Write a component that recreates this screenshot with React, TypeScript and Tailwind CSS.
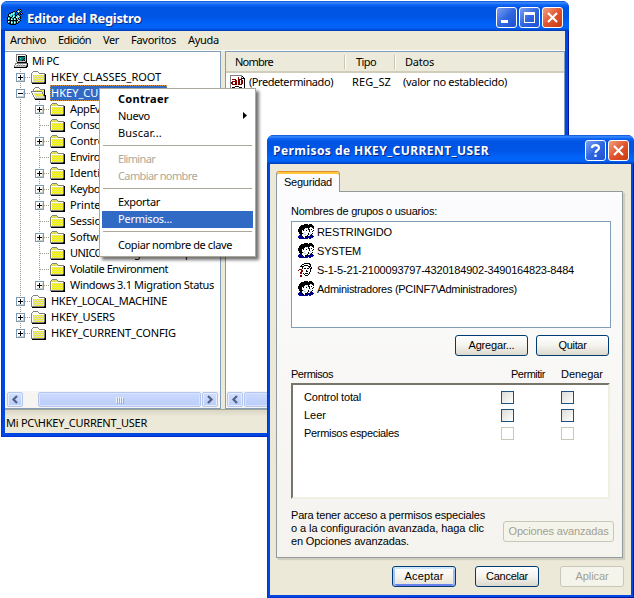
import { useLayoutEffect, useRef, type ReactNode } from "react";

/** Text that spreads its letters to a fixed width in pixels. */
function Label({ text, w, className = "" }: { text: string; w: number; className?: string }) {
  const ref = useRef<HTMLSpanElement>(null);
  useLayoutEffect(() => {
    const el = ref.current;
    if (!el) return;
    el.style.letterSpacing = "0px";
    const natural = el.getBoundingClientRect().width;
    el.style.letterSpacing = `${(w - natural) / text.length}px`;
  }, [text, w]);
  return (
    <span ref={ref} className={`inline-block shrink-0 whitespace-pre ${className}`}>
      {text}
    </span>
  );
}

const PALETTE: Record<string, string> = {
  k: "#000000", g: "#808080", s: "#c0c0c0", w: "#ffffff", y: "#f0f040", e: "#d8d8b8",
  b: "#000090", t: "#008080", c: "#40d8d8", r: "#800000", l: "#a8c8f0", p: "#ffff00", q: "#e0e060",
};

function Pixels({ rows, className = "" }: { rows: string[]; className?: string }) {
  const width = Math.max(...rows.map((r) => r.length));
  return (
    <svg width={width} height={rows.length} shapeRendering="crispEdges" className={`block shrink-0 ${className}`}>
      {rows.flatMap((row, y) =>
        [...row].map((ch, x) =>
          PALETTE[ch] ? <rect key={`${x}-${y}`} x={x} y={y} width="1" height="1" fill={PALETTE[ch]} /> : null
        )
      )}
    </svg>
  );
}

const FOLDER = [
  "..ggggg........",
  ".gwwwwwg.......",
  "gwwwwwwwgggggg.",
  "gwwwwwwwwwwwwgk",
  "gweyeyeyeyeyegk",
  "gwyeyeyeyeyeygk",
  "gweyeyeyeyeyegk",
  "gwyeyeyeyeyeygk",
  "gweyeyeyeyeyegk",
  "gwyeyeyeyeyeygk",
  "gweyeyeyeyeyegk",
  "gggggggggggggkk",
  ".kkkkkkkkkkkkkk",
];
const SUBFOLDER = [
  "..ggggg........",
  ".gqqqqqg.......",
  "gqqqqqqqgggggg.",
  "gwwwwwwwwwwwwgk",
  "gwqpqpqpqpqpqgk",
  "gwpqpqpqpqpqpgk",
  "gwqpqpqpqpqpqgk",
  "gwpqpqpqpqpqpgk",
  "gwqpqpqpqpqpqgk",
  "gwpqpqpqpqpqpgk",
  "gwqpqpqpqpqpqgk",
  "gggggggggggggkk",
  ".kkkkkkkkkkkkkk",
];
const OPEN_FOLDER = [
  "....gggg.......",
  "...gwwwwg......",
  "..gwwwwwwggggg.",
  "..gweyeyeyeyek.",
  "gggggggggggyek.",
  "gwwwwwwwwwwgek.",
  ".gweyeyeyeygyk.",
  ".gwyeyeyeyeygk.",
  "..gweyeyeyeygkk",
  "..gwyeyeyeyeygk",
  "...gweyeyeyeygk",
  "...gggggggggggk",
  "....kkkkkkkkkkk",
];
const COMPUTER = [
  "..gggggggggg..",
  "..gwwwwwwwwsk.",
  "..gwkkkkkkksk.",
  "..gwkttttttsk.",
  "..gwktctttksk.",
  "..gwkttttktsk.",
  "..gwktttktksk.",
  "..gssssssssgk.",
  "...kkkkkkkkkk.",
  ".ggggggggggggk",
  ".gwwswswswwwsk",
  "gwsgsgsgsggsgk",
  "gssssssssssskk",
  "kkkkkkkkkkkkk.",
];
const REGEDIT = [
  "...........k.k..",
  "..........kckck.",
  "......kk.kcwck..",
  "....kkcck.kck.k.",
  "..kkccwck..k.kck",
  ".kccwcctk.kk.kk.",
  ".kwcctcckkcck...",
  ".kkcckwckccwck..",
  "kctkkcckkwcctk..",
  "kwckctkctkckck..",
  "kctkwckwckctk...",
  "kkkkkkkkkkkwck..",
  "kwckctkctkctk...",
  "kctkwckwckck....",
  ".kkkctkctkk.....",
  "...kkkkkk.......",
];
const GROUP = [
  "......kkkk.kkk..",
  "...kkkkkkkkkkkk.",
  "..kkkkkkkkkkkkkk",
  ".kkkkkkkkkkkwlkk",
  ".kkkkkkwlwkwwwwk",
  "kkkkkkwwwwkkwkw.",
  "kkkkwkwwkwwkwwwk",
  "kkkkwwwwwwwkwwk.",
  ".kkkwwlwwwwwlww.",
  ".kkkklwwwwkwwwk.",
  "..kkwwllwwkllk..",
  ".bbkwwwwwkwwkbb.",
  "bbbbkwwkkbbkbbbb",
  "bbbbbkwkbbbbbbb.",
  ".bbbbbbbbb.bb...",
];
const UNKNOWN_USER = [
  "......kkkkkk..",
  "....kk.....kk.",
  "...k..kkkk..k.",
  "..kkkk....kkk.",
  "....k......k.k",
  "....k.kk.kk.kk",
  ".rrr........k.",
  "r..rr...k...k.",
  "...rr...kk..k.",
  "..rr.......k..",
  "..rr.k.kkk.k..",
  "......k...k...",
  "..rr...kkk....",
  "..rr..........",
];
const STRING_VALUE = [
  "gggggggggggg....",
  "gwwwwwwwwwwgk...",
  "gwwwwwwwrwwgwk..",
  "gwwwwwwwrwwkkkk.",
  "gwrrrrwwrrrrwwk.",
  "gwwwwrrwrrwrrwk.",
  "gwrrrrrwrrwrrwk.",
  "grrwwrrwrrwrrwk.",
  "grrwwrrwrrwrrwk.",
  "gwrrrrrwrrrrwwk.",
  "gwwwwwwwwwwwwwk.",
  "gwwwwkkkkwwwwwk.",
  "gwkkkwwwwkkkwwk.",
  "gkwwwwwwwwwwkwk.",
  "kkkkkkkkkkkkkkk.",
];

function Expander({ open = false }: { open?: boolean }) {
  return (
    <svg width="9" height="9" shapeRendering="crispEdges" className="block shrink-0">
      <rect width="9" height="9" fill="#7b9ab5" />
      <rect x="1" y="1" width="7" height="7" fill="#fff" />
      <rect x="2" y="7" width="6" height="1" fill="#d4cebc" />
      <rect x="7" y="2" width="1" height="5" fill="#d4cebc" />
      <rect x="2" y="4" width="5" height="1" />
      {!open && <rect x="4" y="2" width="1" height="5" />}
    </svg>
  );
}

type Node = { text: string; w: number; level: 1 | 2; box?: "+" | "-"; last?: boolean };
const NODES: Node[] = [
  { text: "HKEY_CLASSES_ROOT", w: 110, level: 1, box: "+" },
  { text: "HKEY_CURRENT_USER", w: 114, level: 1, box: "-" },
  { text: "AppEvents", w: 51, level: 2, box: "+" },
  { text: "Console", w: 39, level: 2 },
  { text: "Control Panel", w: 67, level: 2, box: "+" },
  { text: "Environment", w: 62, level: 2 },
  { text: "Identities", w: 48, level: 2, box: "+" },
  { text: "Keyboard Layout", w: 82, level: 2, box: "+" },
  { text: "Printers", w: 40, level: 2, box: "+" },
  { text: "SessionInformation", w: 97, level: 2 },
  { text: "Software", w: 45, level: 2, box: "+" },
  { text: "UNICODE Program Groups", w: 126, level: 2 },
  { text: "Volatile Environment", w: 98, level: 2 },
  { text: "Windows 3.1 Migration Status", w: 144, level: 2, box: "+", last: true },
  { text: "HKEY_LOCAL_MACHINE", w: 116, level: 1, box: "+" },
  { text: "HKEY_USERS", w: 64, level: 1, box: "+" },
  { text: "HKEY_CURRENT_CONFIG", w: 125, level: 1, box: "+", last: true },
];

/** One 19px indentation cell: dotted guides with an optional expander box. */
function Guide({ box, last, branch = true }: { box?: "+" | "-"; last?: boolean; branch?: boolean }) {
  return (
    <span className="relative block h-4 w-[19px] shrink-0">
      <svg width="19" height="16" shapeRendering="crispEdges" className="block">
        <path d={last ? "M4.5 0v8" : "M4.5 0v16"} stroke="#9c9a8c" strokeDasharray="1 1" />
        {branch && <path d="M5 8.5h10" stroke="#9c9a8c" strokeDasharray="1 1" />}
      </svg>
      {box && (
        <span className="absolute left-0 top-1">
          <Expander open={box === "-"} />
        </span>
      )}
    </span>
  );
}

function TreeRow({ node }: { node: Node }) {
  const selected = node.box === "-";
  return (
    <div className="flex h-4 items-center pl-[11px]">
      {node.level === 2 && <Guide branch={false} />}
      <Guide box={node.box} last={node.last} />
      {node.level === 2 ? (
        <Pixels rows={SUBFOLDER} className="-ml-[4px] mr-[4px]" />
      ) : (
        <Pixels rows={selected ? OPEN_FOLDER : FOLDER} className="-ml-[4px] mr-[4px]" />
      )}
      <span
        className={
          selected
            ? "flex h-4 items-center border border-dotted border-[#d89540] bg-[#316ac5] pr-px text-white"
            : "flex h-4 items-center pl-px"
        }
      >
        <Label text={node.text} w={node.w} />
      </span>
    </div>
  );
}

function ScrollArrow({ dir }: { dir: "left" | "right" }) {
  return (
    <span className="flex h-[15px] w-4 shrink-0 items-center justify-center rounded-[2px] border border-[#b4c6f0] bg-linear-to-b from-[#d3dffd] to-[#b9cbf8] shadow-[inset_0_0_0_1px_#e6edff]">
      <svg width="8" height="9" className="block">
        <path
          d={dir === "left" ? "M6 1 2.500 4.500 6 8" : "M2 1l3.500 3.500L2 8"}
          fill="none"
          stroke="#4d6185"
          strokeWidth="2.200"
        />
      </svg>
    </span>
  );
}

function Thumb({ className }: { className: string }) {
  return (
    <span
      className={`flex h-[15px] items-center justify-center gap-px rounded-[2px] border border-[#b4c6f0] bg-linear-to-b from-[#cbdafe] to-[#bbcdf9] shadow-[inset_0_0_0_1px_#d8e3ff] ${className}`}
    >
      {[0, 1, 2, 3].map((i) => (
        <span key={i} className="h-[6px] w-px bg-[#eef4fe] shadow-[1px_1px_0_#8cb0f8]" />
      ))}
    </span>
  );
}

function CaptionButton({ kind }: { kind: "min" | "max" | "help" | "close" }) {
  return (
    <span
      className={`flex size-[21px] items-center justify-center rounded-[3px] border border-white ${
        kind === "close"
          ? "bg-linear-to-br from-[#f0a080] via-[#e0532c] to-[#c83a10]"
          : "bg-linear-to-br from-[#7c9ff0] via-[#2f66e0] to-[#1f4fd0]"
      }`}
    >
      <svg width="19" height="19" className="block" fill="none" stroke="#fff">
        {kind === "min" && <path d="M4 13.500h7" strokeWidth="3" shapeRendering="crispEdges" />}
        {kind === "max" && (
          <g shapeRendering="crispEdges">
            <path d="M4 5.500h11" strokeWidth="3" />
            <path d="M4.500 6v8.500h10V6" />
          </g>
        )}
        {kind === "close" && <path d="M5 5l9 9M14 5l-9 9" strokeWidth="2.200" />}
        {kind === "help" && (
          <path d="M6 7C6 3.200 13 3.200 13 7 13 9.500 9.500 9 9.500 12M9.500 13.500v2.500" strokeWidth="2.200" />
        )}
      </svg>
    </span>
  );
}

const TITLE_BG =
  "bg-[linear-gradient(180deg,#0a50d4_0%,#3c8cff_6%,#0f66f5_12%,#0054e3_22%,#0055e5_52%,#0064fb_80%,#0062f5_90%,#0048cc_97%,#0038b0_100%)]";

function TitleBar({ children, buttons, className }: { children: ReactNode; buttons: ReactNode; className: string }) {
  return (
    <div className={`flex shrink-0 items-center justify-between rounded-t-[6px] text-white ${TITLE_BG} ${className}`}>
      <div className="flex items-center font-bold [text-shadow:1px_1px_0_#0a2a80]">{children}</div>
      <div className="flex gap-[2px]">{buttons}</div>
    </div>
  );
}

function RegistryEditor() {
  return (
    <div className="absolute left-px top-px flex h-[436px] w-[568px] flex-col rounded-t-[7px] bg-linear-to-r from-[#0831d9] to-[#0018a0] text-[11px]">
      <TitleBar
        className="h-[30px] pl-[6px] pr-[6px] pt-[3px]"
        buttons={
          <>
            <CaptionButton kind="min" />
            <CaptionButton kind="max" />
            <CaptionButton kind="close" />
          </>
        }
      >
        <Pixels rows={REGEDIT} className="-mt-[2px]" />
        <Label text="Editor del Registro" w={114} className="ml-1 text-[13px] leading-[26px]" />
      </TitleBar>
      <div className="mx-px mb-px flex min-h-0 grow flex-col border-x-[3px] border-b-[3px] border-[#0046e0] bg-[#ece9d8]">
        <div className="flex h-[19px] shrink-0 items-center gap-3 pb-[2px] pl-[5px]">
          <Label text="Archivo" w={36} />
          <Label text="Edición" w={33} />
          <Label text="Ver" w={16} />
          <Label text="Favoritos" w={45} />
          <Label text="Ayuda" w={31} />
        </div>
        <div className="flex h-[359px] shrink-0 border-t border-white">
          <div className="flex w-[216px] shrink-0 flex-col overflow-hidden border border-l-0 border-[#7f9db9] bg-white">
            <div className="mt-px flex grow flex-col">
              <div className="flex h-4 items-center pl-[9px]">
                <Pixels rows={COMPUTER} />
                <Label text="Mi PC" w={27} className="ml-1" />
              </div>
              {NODES.map((node) => (
                <TreeRow key={node.text} node={node} />
              ))}
            </div>
            <div className="flex h-[17px] shrink-0 items-center bg-[#f6f5f1] pl-[2px] pr-[2px]">
              <ScrollArrow dir="left" />
              <Thumb className="ml-[15px] mr-px grow" />
              <ScrollArrow dir="right" />
            </div>
          </div>
          <div className="w-1 shrink-0" />
          <div className="flex grow flex-col border border-[#7f9db9] bg-white">
            <div className="flex h-[21px] items-center border-b-2 border-[#d0cdbb] bg-[#ebeadb] pl-[9px]">
              <Label text="Nombre" w={38} />
              <span className="ml-[71px] mr-[10px] h-[14px] w-[2px] border-l border-[#c7c5b2] bg-white" />
              <Label text="Tipo" w={20} />
              <span className="ml-[18px] mr-[9px] h-[14px] w-[2px] border-l border-[#c7c5b2] bg-white" />
              <Label text="Datos" w={29} />
            </div>
            <div className="flex h-[18px] items-center pl-1">
              <Pixels rows={STRING_VALUE} />
              <Label text="(Predeterminado)" w={84} className="ml-[3px]" />
              <Label text="REG_SZ" w={39} className="ml-[19px]" />
              <Label text="(valor no establecido)" w={104} className="ml-[12px]" />
            </div>
            <div className="mt-auto flex h-[17px] items-center bg-[#f6f5f1] pl-px pr-[2px]">
              <ScrollArrow dir="left" />
              <Thumb className="ml-px w-[200px]" />
              <span className="grow" />
              <ScrollArrow dir="right" />
            </div>
          </div>
        </div>
        <div className="flex grow items-center border-t border-[#a5a394] bg-linear-to-b from-[#d9d6c6] via-[#ece9d8] via-30% to-[#ece9d8] pl-px pt-[2px]">
          <Label text={"Mi PC\\HKEY_CURRENT_USER"} w={141} />
        </div>
      </div>
    </div>
  );
}

const MENU: (null | { text: string; w: number; kind?: "bold" | "off" | "hot" | "sub" })[] = [
  { text: "Contraer", w: 51, kind: "bold" },
  { text: "Nuevo", w: 32, kind: "sub" },
  { text: "Buscar...", w: 44 },
  null,
  { text: "Eliminar", w: 37, kind: "off" },
  { text: "Cambiar nombre", w: 79, kind: "off" },
  null,
  { text: "Exportar", w: 42 },
  { text: "Permisos...", w: 54, kind: "hot" },
  null,
  { text: "Copiar nombre de clave", w: 114 },
];
const MENU_STYLE = {
  normal: "",
  sub: "",
  bold: "font-bold",
  off: "text-[#aca899]",
  hot: "bg-[#316ac5] text-white",
};

function ContextMenu() {
  return (
    <div className="absolute left-[99px] top-[88px] flex h-[169px] w-[157px] flex-col border border-[#aca899] bg-white p-[2px] text-[11px] shadow-[3px_3px_3px_rgba(0,0,0,0.55)]">
      {MENU.map((item, i) =>
        item ? (
          <div
            key={i}
            className={`flex h-[17px] shrink-0 items-center justify-between pb-[2px] pl-4 pr-[6px] ${MENU_STYLE[item.kind ?? "normal"]}`}
          >
            <Label text={item.text} w={item.w} />
            {item.kind === "sub" && (
              <svg width="4" height="7" className="block">
                <path d="M0 0l4 3.500L0 7z" />
              </svg>
            )}
          </div>
        ) : (
          <div key={i} className="flex min-h-0 grow items-start px-px pt-[3px]">
            <span className="h-px grow bg-[#aca899]" />
          </div>
        )
      )}
    </div>
  );
}

function Button({ text, w, width, kind = "normal" }: { text: string; w: number; width: string; kind?: "normal" | "off" | "default" }) {
  const look = {
    normal: "border-[#003c74] bg-linear-to-b from-white via-[#f4f3ee] to-[#dcd8cc]",
    default:
      "border-[#003c74] bg-linear-to-b from-white via-[#f4f3ee] to-[#e4e1d6] shadow-[inset_0_2px_0_#cee7ff,inset_2px_0_0_#a9c4f2,inset_-2px_0_0_#a0bcee,inset_0_-2px_0_#6982ee]",
    off: "border-[#c9c7ba] bg-[#f5f4ea] text-[#a1a192]",
  }[kind];
  return (
    <span className={`flex h-[21px] items-center justify-center rounded-[3px] border pb-px ${width} ${look}`}>
      <Label text={text} w={w} />
    </span>
  );
}

function Check({ off = false }: { off?: boolean }) {
  return (
    <span
      className={`block size-[13px] border ${
        off ? "border-[#cac8bb] bg-white" : "border-[#1c5180] bg-linear-to-br from-[#dcdcd7] to-white"
      }`}
    />
  );
}

function PermissionsDialog() {
  return (
    <div className="absolute left-[267px] top-[135px] flex h-[463px] w-[367px] flex-col rounded-t-[7px] bg-linear-to-r from-[#0831d9] to-[#0018a0] font-['Liberation_Sans',Arial,sans-serif] text-[11px]">
      <TitleBar
        className="h-[29px] pl-[6px] pr-[5px] pt-[2px]"
        buttons={
          <>
            <CaptionButton kind="help" />
            <CaptionButton kind="close" />
          </>
        }
      >
        <Label
          text="Permisos de HKEY_CURRENT_USER"
          w={216}
          className="pt-px font-['Noto_Sans',sans-serif] text-[12px] leading-[26px]"
        />
      </TitleBar>
      <div className="mx-px mb-px flex min-h-0 grow flex-col border-x-2 border-b-2 border-[#0046e0] bg-[#ece9d8] px-[6px] pt-[7px]">
        <div className="z-10 -mb-px flex h-[21px] w-16 items-center justify-center rounded-t-[3px] border border-b-0 border-[#919b9c] border-t-[#e68b2c] bg-[#fcfcfe] pb-px shadow-[inset_0_2px_0_#ffc73c]">
          <Label text="Seguridad" w={48} />
        </div>
        <div className="flex h-[367px] w-[347px] flex-col border border-[#919b9c] bg-linear-to-b from-[#fcfcfe] to-[#f4f3ee] pl-[14px] shadow-[2px_2px_1px_#d0cebf]">
          <div className="flex h-[29px] items-center pt-2">
            <Label text="Nombres de grupos o usuarios:" w={146} />
          </div>
          <div className="h-[107px] w-80 border border-[#7f9db9] bg-white pl-[6px]">
            {[
              { text: "RESTRINGIDO", w: 75, icon: GROUP },
              { text: "SYSTEM", w: 44, icon: GROUP },
              { text: "S-1-5-21-2100093797-4320184902-3490164823-8484", w: 257, icon: UNKNOWN_USER },
              { text: "Administradores (PCINF7\\Administradores)", w: 200, icon: GROUP },
            ].map((u) => (
              <div key={u.text} className="flex h-[19px] items-center">
                <span className="flex w-[19px] justify-start">
                  <Pixels rows={u.icon} />
                </span>
                <Label text={u.text} w={u.w} />
              </div>
            ))}
          </div>
          <div className="mt-[7px] flex gap-2 pl-[164px]">
            <Button text="Agregar..." w={46} width="w-[73px]" />
            <Button text="Quitar" w={28} width="w-[73px]" />
          </div>
          <div className="mt-[10px] flex h-[17px] items-center pb-[2px]">
            <Label text="Permisos" w={42} />
            <Label text="Permitir" w={34} className="ml-[178px]" />
            <Label text="Denegar" w={42} className="ml-4" />
          </div>
          <div className="h-[116px] w-[319px] border-2 border-b-[#f1efe2] border-l-[#77746a] border-r-[#f1efe2] border-t-[#77746a] bg-white pl-[11px] pt-[3px]">
            {[
              { text: "Control total", w: 57 },
              { text: "Leer", w: 22 },
              { text: "Permisos especiales", w: 95, off: true },
            ].map((p) => (
              <div key={p.text} className="flex h-[18px] items-center">
                <span className="w-[197px]">
                  <Label text={p.text} w={p.w} />
                </span>
                <Check off={p.off} />
                <span className="w-[47px]" />
                <Check off={p.off} />
              </div>
            ))}
          </div>
          <div className="mt-[10px] flex">
            <div className="flex w-[212px] flex-col leading-[13px]">
              <Label text="Para tener acceso a permisos especiales" w={194} className="self-start" />
              <Label text="o a la configuración avanzada, haga clic" w={193} className="self-start" />
              <Label text="en Opciones avanzadas." w={118} className="self-start" />
            </div>
            <div className="pt-3">
              <Button text="Opciones avanzadas" w={100} width="w-[111px]" kind="off" />
            </div>
          </div>
        </div>
        <div className="mt-2 flex pl-[116px]">
          <Button text="Aceptar" w={39} width="w-16" kind="default" />
          <span className="w-[19px]" />
          <Button text="Cancelar" w={42} width="w-16" />
          <span className="w-[21px]" />
          <Button text="Aplicar" w={33} width="w-16" kind="off" />
        </div>
      </div>
    </div>
  );
}

export default function App() {
  return (
    <div className="relative h-[598px] w-[634px] overflow-hidden bg-white font-['Noto_Sans','Open_Sans',sans-serif] leading-4 text-black">
      <RegistryEditor />
      <ContextMenu />
      <PermissionsDialog />
    </div>
  );
}
